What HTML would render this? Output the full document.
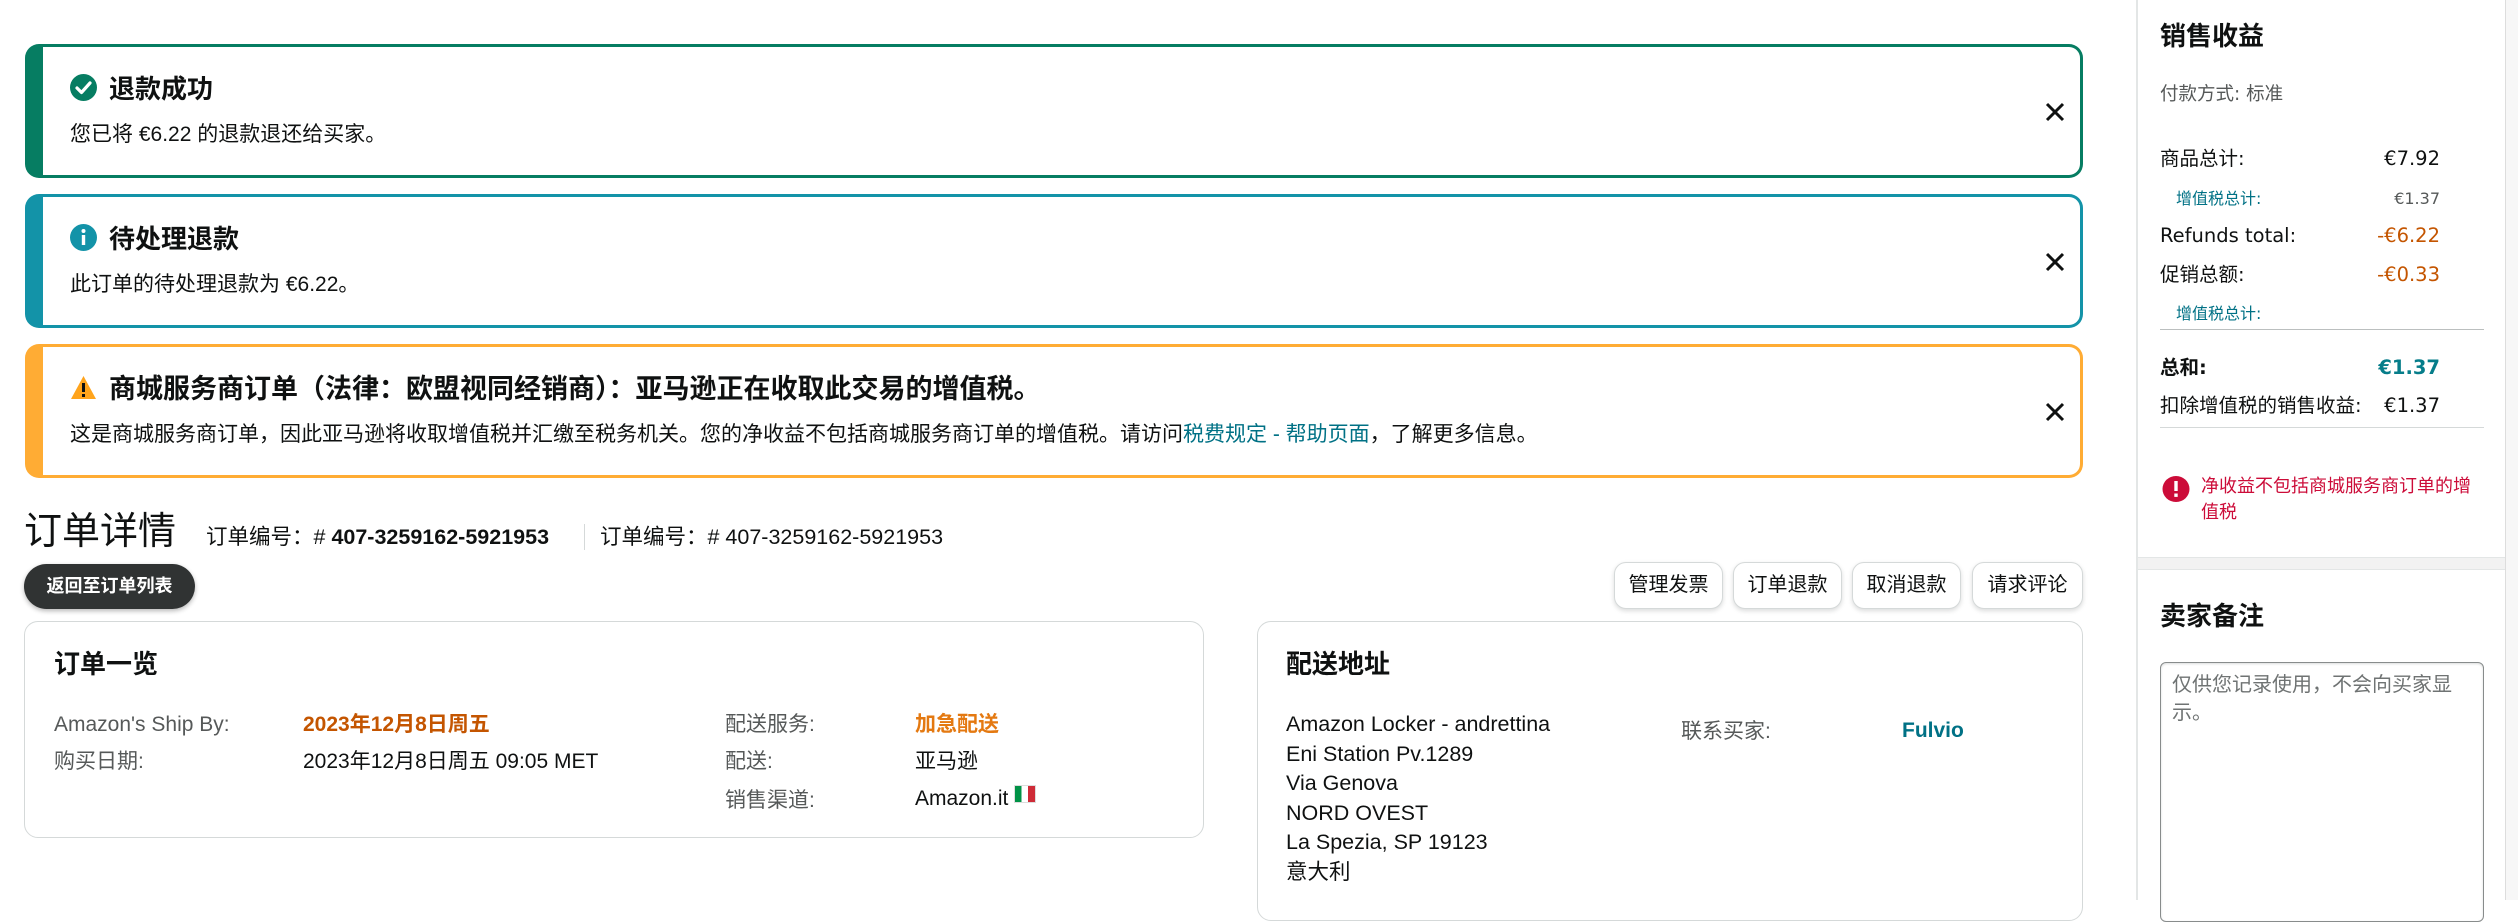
<!DOCTYPE html>
<html><head><meta charset="utf-8"><style>
*{box-sizing:border-box;margin:0;padding:0}
body{width:2518px;height:900px;overflow:hidden;background:#fff;font-family:"Liberation Sans","Noto Sans CJK SC",sans-serif;color:#0f1111;position:relative}
.a{position:absolute}
.alert{position:absolute;left:25px;width:2058px;height:134px;border:3px solid;border-left-width:18px;border-radius:14px;background:#fff}
.alert .t{position:absolute;left:66px;top:24px;font-size:26px;font-weight:bold;line-height:36px;white-space:nowrap}
.alert .b{position:absolute;left:27px;top:73px;font-size:21px;line-height:30px;white-space:nowrap}
.alert .ic{position:absolute;left:27px;top:27px;width:27px;height:27px}
.alert .x{position:absolute;right:15px;top:55px;width:20px;height:20px}
.btn{position:absolute;top:562px;height:47px;border:1px solid #d5d9d9;border-radius:12px;background:#fff;box-shadow:0 2px 5px rgba(15,17,17,.15);font-size:20px;line-height:45px;text-align:center}
.card{position:absolute;border:1px solid #d5d9d9;border-radius:14px;background:#fff}
.lab{color:#565959;font-size:21px;line-height:28px;white-space:nowrap}
.v{font-size:21px;line-height:28px;white-space:nowrap}
.rp{font-family:"DejaVu Sans","Noto Sans CJK SC",sans-serif}
.row{position:absolute;left:2160px;width:280px;display:flex;justify-content:space-between;align-items:baseline;font-size:19.5px;line-height:28px;white-space:nowrap}
.row.s{left:2176px;width:264px;font-size:16px}
</style></head><body>

<div class="alert" style="top:44px;border-color:#067d62">
<svg class="ic" viewBox="0 0 27 27"><circle cx="13.5" cy="13.5" r="13.5" fill="#067d62"/><path d="M7 14l4.5 4.5L20 9" stroke="#fff" stroke-width="3.2" fill="none" stroke-linecap="round" stroke-linejoin="round"/></svg>
<div class="t">退款成功</div>
<div class="b">您已将 €6.22 的退款退还给买家。</div>
<svg class="x" viewBox="0 0 20 20"><path d="M2 2L18 18M18 2L2 18" stroke="#0f1111" stroke-width="3"/></svg>
</div>

<div class="alert" style="top:194px;border-color:#1393a8">
<svg class="ic" viewBox="0 0 27 27"><circle cx="13.5" cy="13.5" r="13.5" fill="#1393a8"/><rect x="11.8" y="11" width="3.4" height="10" fill="#fff"/><circle cx="13.5" cy="7" r="2" fill="#fff"/></svg>
<div class="t">待处理退款</div>
<div class="b">此订单的待处理退款为 €6.22。</div>
<svg class="x" viewBox="0 0 20 20"><path d="M2 2L18 18M18 2L2 18" stroke="#0f1111" stroke-width="3"/></svg>
</div>

<div class="alert" style="top:344px;border-color:#ffac34">
<svg class="ic" viewBox="0 0 27 27"><path d="M13.5 2L26 25H1z" fill="#ffa41c"/><rect x="12" y="9" width="3" height="9" fill="#0f1111"/><rect x="12" y="20" width="3" height="3" fill="#0f1111"/></svg>
<div class="t" style="font-size:27px">商城服务商订单（法律：欧盟视同经销商）：亚马逊正在收取此交易的增值税。</div>
<div class="b">这是商城服务商订单，因此亚马逊将收取增值税并汇缴至税务机关。您的净收益不包括商城服务商订单的增值税。请访问<span style="color:#007185">税费规定 - 帮助页面</span>，了解更多信息。</div>
<svg class="x" viewBox="0 0 20 20"><path d="M2 2L18 18M18 2L2 18" stroke="#0f1111" stroke-width="3"/></svg>
</div>

<div class="a" style="left:24px;top:508px;font-size:38px;line-height:48px">订单详情</div>
<div class="a" style="left:206px;top:522px;font-size:21.5px;line-height:30px;white-space:nowrap">订单编号：# <b>407-3259162-5921953</b></div>
<div class="a" style="left:584px;top:524px;width:1px;height:26px;background:#d5d9d9"></div>
<div class="a" style="left:600px;top:522px;font-size:21.5px;line-height:30px;white-space:nowrap">订单编号：# 407-3259162-5921953</div>

<div class="a" style="left:24px;top:564px;width:171px;height:45px;border-radius:23px;background:#303333;color:#fff;font-weight:bold;font-size:18px;line-height:45px;text-align:center;box-shadow:0 2px 5px rgba(15,17,17,.3)">返回至订单列表</div>

<div class="btn" style="left:1614px;width:109px">管理发票</div>
<div class="btn" style="left:1733px;width:109px">订单退款</div>
<div class="btn" style="left:1852px;width:109px">取消退款</div>
<div class="btn" style="left:1972px;width:111px">请求评论</div>

<div class="card" style="left:24px;top:621px;width:1180px;height:217px">
<div class="a" style="left:29px;top:24px;font-size:26px;font-weight:bold;line-height:36px">订单一览</div>
<div class="a lab" style="left:29px;top:89px">Amazon's Ship By:</div>
<div class="a v" style="left:278px;top:89px;color:#c45500;font-weight:bold">2023年12月8日周五</div>
<div class="a lab" style="left:29px;top:126px">购买日期:</div>
<div class="a v" style="left:278px;top:126px">2023年12月8日周五 09:05 MET</div>
<div class="a lab" style="left:700px;top:89px">配送服务:</div>
<div class="a v" style="left:890px;top:89px;color:#e47911;font-weight:bold">加急配送</div>
<div class="a lab" style="left:700px;top:126px">配送:</div>
<div class="a v" style="left:890px;top:126px">亚马逊</div>
<div class="a lab" style="left:700px;top:165px">销售渠道:</div>
<div class="a v" style="left:890px;top:163px">Amazon.it <span style="display:inline-block;width:22px;height:18px;vertical-align:2px;background:linear-gradient(90deg,#009246 33%,#fff 33% 66%,#ce2b37 66%);border:1px solid #ddd"></span></div>
</div>

<div class="card" style="left:1257px;top:621px;width:826px;height:300px">
<div class="a" style="left:28px;top:24px;font-size:26px;font-weight:bold;line-height:36px">配送地址</div>
<div class="a v" style="left:28px;top:88px;line-height:29.5px;font-size:21.5px">Amazon Locker - andrettina<br>Eni Station Pv.1289<br>Via Genova<br>NORD OVEST<br>La Spezia, SP 19123<br>意大利</div>
<div class="a lab" style="left:423px;top:96px">联系买家:</div>
<div class="a v" style="left:644px;top:95px;color:#007185;font-weight:bold">Fulvio</div>
</div>

<!-- right panel -->
<div class="a" style="left:2136px;top:0;width:2px;height:900px;background:#e3e6e6"></div>
<div class="a" style="left:2505px;top:0;width:13px;height:900px;background:#f7f7f7;border-left:1px solid #dddddd"></div>
<div class="a" style="left:2138px;top:557px;width:367px;height:13px;background:#f2f2f2;border-top:1px solid #e3e6e6;border-bottom:1px solid #e3e6e6"></div>
<div class="rp">
<div class="a" style="left:2160px;top:18px;font-size:26px;font-weight:bold;line-height:34px;font-family:'Noto Sans CJK SC',sans-serif">销售收益</div>
<div class="a" style="left:2160px;top:80px;font-size:18.5px;color:#565959">付款方式: 标准</div>
<div class="row" style="top:145px"><span>商品总计:</span><span>€7.92</span></div>
<div class="row s" style="top:185px"><span style="color:#007185">增值税总计:</span><span style="color:#565959">€1.37</span></div>
<div class="row" style="top:222px"><span>Refunds total:</span><span style="color:#c45500">-€6.22</span></div>
<div class="row" style="top:261px"><span>促销总额:</span><span style="color:#c45500">-€0.33</span></div>
<div class="row s" style="top:300px"><span style="color:#007185">增值税总计:</span><span></span></div>
<div class="a" style="left:2160px;top:329px;width:324px;height:1px;background:#bbbfbf"></div>
<div class="row" style="top:354px;font-weight:bold"><span>总和:</span><span style="color:#067d8a">€1.37</span></div>
<div class="row" style="top:392px"><span>扣除增值税的销售收益:</span><span>€1.37</span></div>
<div class="a" style="left:2160px;top:427px;width:324px;height:1px;background:#d5d9d9"></div>
<svg class="a" style="left:2162px;top:475px" width="28" height="28" viewBox="0 0 28 28"><ellipse cx="14" cy="14" rx="13.5" ry="13" fill="#cc0c39"/><rect x="12.3" y="6" width="3.4" height="10" fill="#fff"/><rect x="12.3" y="18.5" width="3.4" height="3.4" fill="#fff"/></svg>
<div class="a" style="left:2201px;top:472px;width:270px;font-size:18px;line-height:26px;color:#cc0c39;font-family:'Noto Sans CJK SC',sans-serif">净收益不包括商城服务商订单的增值税</div>
<div class="a" style="left:2160px;top:598px;font-size:26px;font-weight:bold;line-height:34px;font-family:'Noto Sans CJK SC',sans-serif">卖家备注</div>
<div class="a" style="left:2160px;top:662px;width:324px;height:260px;border:1px solid #888c8c;border-radius:6px;box-shadow:inset 0 1px 2px rgba(15,17,17,.15);padding:6px 11px;font-size:20px;line-height:28px;color:#6f7373;font-family:'Noto Sans CJK SC',sans-serif">仅供您记录使用，不会向买家显示。</div>
</div>
</body></html>
